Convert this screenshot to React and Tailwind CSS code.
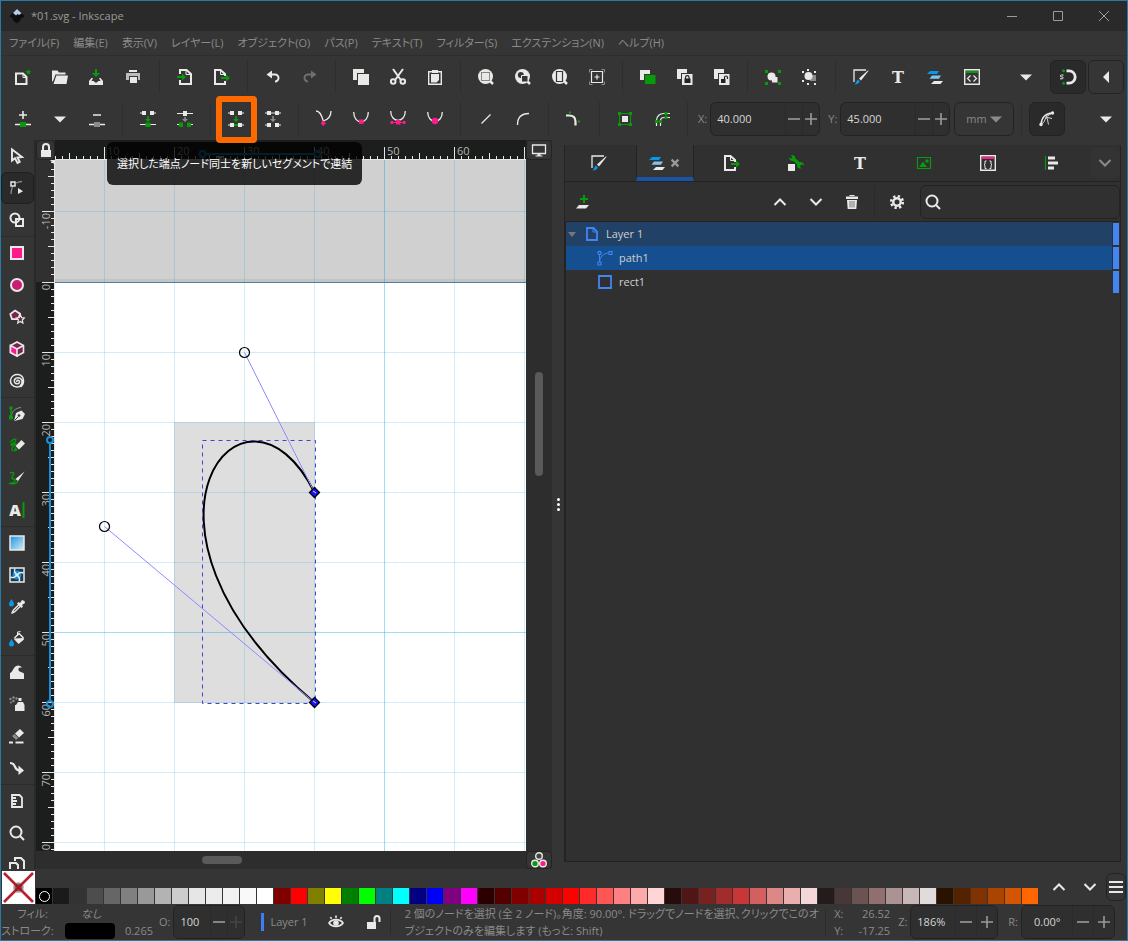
import React, { useState } from 'react';

const W = '#e9e9e7';
const G = '#079a0b';
const P = '#ff1a8c';
const B = '#0b97e4';
const D = '#353535';
const GR = '#8b8b8b';

const icons = {
  new: (
    <>
      <path d="M1 4.5h7l3.5 3.5v7H1z" fill="none" stroke={W} strokeWidth="2" />
      <path d="M8 4v4.500h4" fill="none" stroke={W} />
      <path d="M13.300 0l.9 1.900 2 .2-1.500 1.400.5 2-1.900-1-1.800 1 .5-2-1.500-1.400 2-.2z" fill={G} />
    </>
  ),
  open: <path d="M0 13V1.500h5.500l1.500 2h6.500v2H3.500L1.500 11zM4.300 6.500H16L14.500 15H1.500z" fill={W} />,
  save: (
    <>
      <path d="M6 0h2v4h3L7 8 3 4h3z" fill={G} />
      <path d="M2.500 9H4l-1.500 3H5c.5 2 3.500 2 4 0h2.500L10 9h1.500L14 12v4H0v-4z" fill={W} />
    </>
  ),
  print: (
    <>
      <path d="M3 1h8v2H3zM4 8h7v6H4z" fill={W} />
      <path d="M0 4h14v7h-2V7H3v4H0z" fill="#bcbcbc" />
    </>
  ),
  import: (
    <>
      <path d="M3 5V1h6.500L14 5v10H3v-4" fill="none" stroke={W} strokeWidth="2" />
      <path d="M9 1v4.500h5" fill="none" stroke={W} />
      <path d="M0 7h5V4.500L9 8l-4 3.500V9H0z" fill={G} />
    </>
  ),
  export: (
    <>
      <path d="M11 12v3H1V1h5.500L11 5v2" fill="none" stroke={W} strokeWidth="2" />
      <path d="M6.500 1v4.500H11" fill="none" stroke={W} />
      <path d="M7 8h5V5.500L16 9l-4 3.500V10H7z" fill={G} />
    </>
  ),
  undo: (
    <>
      <path d="M7 1.500v8L1.500 5.500z" fill={W} />
      <path d="M5 5.500h5a3.500 3.500 0 0 1 0 7" fill="none" stroke={W} strokeWidth="2" />
    </>
  ),
  redo: (
    <>
      <path d="M9 1.500v8l5.500-4z" fill="#6f6f6f" />
      <path d="M11 5.500H6a3.500 3.500 0 0 0 0 7" fill="none" stroke="#6f6f6f" strokeWidth="2" />
    </>
  ),
  copy: <path d="M0 0h11v4H4v7H0zM5 5h11v11H5z" fill={W} />,
  cut: (
    <g fill="none" stroke={W} strokeWidth="2">
      <circle cx="3.200" cy="12.500" r="2.300" />
      <circle cx="12.800" cy="12.500" r="2.300" />
      <path d="M3 0l7.500 10.500M13 0L5.500 10.500" />
    </g>
  ),
  paste: (
    <>
      <path d="M1.700 2.700h12.600v12.600H1.700z" fill="none" stroke={W} strokeWidth="1.400" />
      <path d="M5 1h6v3H5zM4 5h8v6l-2.500 2.500H4z" fill={W} />
    </>
  ),
  zoomSel: (
    <>
      <circle cx="7.500" cy="7.500" r="7.500" fill={W} />
      <path d="M12 12l3 3" stroke={W} strokeWidth="2.500" />
      <path d="M3.500 3.500h8v8h-8z" fill="none" stroke="#222" strokeDasharray="1 1" />
    </>
  ),
  zoomDraw: (
    <>
      <circle cx="7.500" cy="7.500" r="7.500" fill={W} />
      <path d="M12 12l3 3" stroke={W} strokeWidth="2.500" />
      <circle cx="5.800" cy="6" r="3" fill={D} />
      <path d="M6.500 6.500H13V13H6.500z" fill={D} stroke={W} />
    </>
  ),
  zoomPage: (
    <>
      <circle cx="7.500" cy="7.500" r="7.500" fill={W} />
      <path d="M12 12l3 3" stroke={W} strokeWidth="2.500" />
      <path d="M4.500 2.500h6v10h-6z" fill="none" stroke={D} strokeWidth="1.200" />
    </>
  ),
  zoomCenter: (
    <g fill="none">
      <path d="M.5 3.500v-3h3M12.500.5h3v3M15.500 12.500v3h-3M3.500 15.500h-3v-3" stroke={GR} />
      <path d="M2.500 2.500h11v11h-11zM8 5.500v5M5.500 8h5" stroke={W} strokeWidth="1.200" />
    </g>
  ),
  clone: (
    <>
      <path d="M0 1h10v4H4v6H0z" fill={W} />
      <path d="M5 6h10.500v9H5z" fill={G} />
    </>
  ),
  cloneLock: (
    <>
      <path d="M0 0h10v4H4v6H0zM5 5h10.500v11H5z" fill={W} />
      <path d="M7.500 9.500h6V14h-6z" fill="#222" />
      <path d="M8.500 10V8.500a1.800 1.800 0 0 1 3.600 0V10" fill="none" stroke="#222" strokeWidth="1.200" />
    </>
  ),
  cloneUnlock: (
    <>
      <path d="M0 0h10v4H4v6H0zM5 5h10.500v11H5z" fill={W} />
      <path d="M7 10h4.500v4H7z" fill="#222" />
      <path d="M10.500 10V8.500a1.500 1.500 0 0 1 3 0V10" fill="none" stroke="#222" strokeWidth="1.200" />
    </>
  ),
  group: (
    <>
      <path d="M0 1h3v3H0zM13 1h3v3h-3zM0 13h3v3H0zM13 13h3v3h-3z" fill={G} />
      <path d="M7 8h5.500v5.500H7z" fill={W} />
      <circle cx="6.500" cy="7.500" r="4" fill={W} />
    </>
  ),
  ungroup: (
    <>
      <path d="M0 2h2v2H0zM5 0h2v2H5zM12 2h2v2h-2zM0 11h2v2H0zM5 14h2v2H5zM12 14h2v2h-2z" fill={W} />
      <path d="M8 6h6v6H8z" fill={GR} />
      <circle cx="6.500" cy="7" r="4" fill={W} />
    </>
  ),
  fill: (
    <>
      <path d="M1 13V1h12" fill="none" stroke={W} strokeWidth="1.300" />
      <path d="M15.800 1.500L8 11.500 6 9.500 14.500 1.800z" fill={W} />
      <path d="M5 10.500l1.800 1.800c-.5 2.500-3 3.200-5.300 3.200C3 14.500 3 12 5 10.500z" fill={B} />
    </>
  ),
  text: (
    <text x="8" y="14" textAnchor="middle" fontFamily="DejaVu Serif" fontWeight="bold" fontSize="16" fill={W}>T</text>
  ),
  layers: (
    <>
      <path d="M3 2h9l-2 3H0z" fill={B} />
      <path d="M5 6.500h9l-2 3.200H2.500z" fill="#7cc6f0" />
      <path d="M7 12h9l-2.500 3H4z" fill={W} />
    </>
  ),
  xml: (
    <>
      <path d="M.7.7h14.600v14.600H.7z" fill="none" stroke={W} strokeWidth="1.400" />
      <path d="M2 2h12v2H2z" fill={G} />
      <path d="M6.500 6.500L3.500 9.500l3 3M9.500 6.500l3 3-3 3" fill="none" stroke={W} strokeWidth="1.200" />
    </>
  ),
  caret: <path d="M2 5.500h12L8 11.500z" fill={W} />,
  caretGray: <path d="M2 5.500h12L8 11.500z" fill={GR} />,
  caretLeft: <path d="M11 2v12L5 8z" fill={W} />,
  magnet: (
    <>
      <path d="M6.500 1.800H9a6.200 6.200 0 0 1 0 12.400H6.500" fill="none" stroke={W} strokeWidth="2.800" />
      <path d="M3.500 6H1.300C0 6 0 7.800 1.300 7.800h.9c1.300 0 1.300 2 0 2H0" fill="none" stroke={W} />
      <circle cx="3.500" cy="1.800" r="1.500" fill={G} />
      <circle cx="3.500" cy="14.200" r="1.500" fill={G} />
    </>
  ),
  nodeAdd: (
    <>
      <path d="M4 4h8M8 0v8M0 13.500h16" stroke={W} strokeWidth="1.600" />
      <path d="M5 11h6v5H5z" fill={G} />
    </>
  ),
  nodeDel: (
    <>
      <path d="M4 4h8M0 13.500h16" stroke={W} strokeWidth="1.500" />
      <path d="M5 11h6v5H5z" fill={GR} />
    </>
  ),
  nodeJoin: (
    <>
      <path d="M0 2h4M12 2h4M0 13.500h16" stroke={W} strokeWidth="1.200" />
      <path d="M2 0h4v4H2zM10 0h4v4h-4z" fill={W} />
      <path d="M7.200 5h1.600v3H11l-3 3-3-3h2.200zM5.500 11.500h5V16h-5z" fill={G} />
    </>
  ),
  nodeBreak: (
    <>
      <path d="M0 2.500h16M0 13.500h3M13 13.500h3" stroke={W} strokeWidth="1.200" />
      <path d="M6 0h4v5H6z" fill={W} />
      <path d="M7.200 6h1.600v2H11l-3 3-3-3h2.200z" fill={GR} />
      <path d="M2 11.500h4V16H2zM10 11.500h4V16h-4z" fill={G} />
    </>
  ),
  segJoin: (
    <>
      <path d="M0 2h4M12 2h4M0 14h4M12 14h4" stroke={W} strokeWidth="1.200" />
      <path d="M6 14h4" stroke={G} strokeWidth="2" />
      <path d="M2 0h4v4H2zM10 0h4v4h-4zM2 12h4v4H2zM10 12h4v4h-4z" fill={W} />
      <path d="M7.200 5h1.600v3H11l-3 3-3-3h2.200z" fill={G} />
    </>
  ),
  segDel: (
    <>
      <path d="M0 2h4M12 2h4M0 14h4M12 14h4" stroke={W} strokeWidth="1.200" />
      <path d="M6 2h4" stroke={GR} strokeWidth="2" />
      <path d="M2 0h4v4H2zM10 0h4v4h-4zM2 12h4v4H2zM10 12h4v4h-4z" fill={W} />
      <path d="M7.200 5h1.600v3H11l-3 3-3-3h2.200z" fill={GR} />
    </>
  ),
  cusp: (
    <>
      <path d="M0 0c4 0 6 5 7.300 10C10.500 9 15 6 15 0" fill="none" stroke={W} strokeWidth="1.300" />
      <path d="M7.300 9.500L10 12.200 7.300 15l-2.700-2.800z" fill={P} />
    </>
  ),
  smooth: (
    <>
      <path d="M.7 1c0 13 14.600 13 14.600 0" fill="none" stroke={W} strokeWidth="1.300" />
      <path d="M6 8.500h4.500V13H6z" fill={P} />
    </>
  ),
  symm: (
    <>
      <path d="M.7 0c0 12.500 14.600 12.500 14.600 0" fill="none" stroke={W} strokeWidth="1.300" />
      <path d="M1 11.500h14" stroke={P} />
      <path d="M6 9h4.500v4.500H6zM.5 10h2.500v3H.5zM13 10h2.500v3H13z" fill={P} />
    </>
  ),
  auto: (
    <>
      <path d="M.7 1c0 12.500 14.600 12.500 14.600 0" fill="none" stroke={W} strokeWidth="1.300" />
      <circle cx="8" cy="10" r="3.200" fill={P} />
    </>
  ),
  line: <path d="M3.500 12.500l9-9" stroke={W} strokeWidth="1.300" />,
  curve: <path d="M2.500 14C2.500 7 6 2.500 14 2.500" fill="none" stroke={W} strokeWidth="1.300" />,
  corner: (
    <>
      <path d="M0 4.500h3c4 0 6.500 2 6.500 6v4" fill="none" stroke={W} strokeWidth="2.200" />
      <circle cx="4" cy="1.500" r="1.200" fill={G} />
      <circle cx="13" cy="10.500" r="1.200" fill={G} />
    </>
  ),
  toPath: (
    <>
      <path d="M2.500 2.500h11v11h-11z" fill="none" stroke={G} />
      <path d="M1 1h3v3H1zM12 1h3v3h-3zM1 12h3v3H1zM12 12h3v3h-3z" fill={G} />
      <path d="M5 5h6v6H5z" fill={W} />
    </>
  ),
  strokePath: (
    <>
      <path d="M2.500 15v-5.500c0-4 3-7 7-7H16M6.500 15V10c0-2 1.500-3.500 3.500-3.500h6" fill="none" stroke={W} strokeWidth="1.200" />
      <path d="M2.500 10.500h4M12 2.500v4" stroke={G} strokeWidth="1.200" />
      <path d="M1 9h3v3H1zM5 9h3v3H5zM10.500 1h3v3h-3zM10.500 5h3v3h-3z" fill={G} />
    </>
  ),
  outline: (
    <>
      <path d="M2 13.500C2.500 7 6.500 2.500 13.500 2" fill="none" stroke={W} strokeWidth="1.400" />
      <path d="M2 13.500c3-1.500 4-4.500 5-7.500l6-4M7 6.500c2 .5 1.500 4 2.500 7M7 6.500c2 0 4 .5 6 1" fill="none" stroke={W} strokeWidth=".9" />
      <circle cx="2" cy="13.500" r="1.700" fill={W} />
      <circle cx="13.500" cy="2" r="1.700" fill={W} />
    </>
  ),
  select: <path d="M3 1.500v11l3-2.300 2.500 4.800 2.200-1.200L8.500 9.500 13 9z" fill="none" stroke={W} strokeWidth="1.900" />,
  node: (
    <>
      <path d="M2 2h4v4H2z" fill="none" stroke={W} strokeWidth="1.500" />
      <path d="M7 3c2-.8 4-1.500 6-1.500M3.500 7C2.500 9 2 11 2 14" fill="none" stroke={GR} strokeWidth="1.300" />
      <path d="M9 8v6l5-2.700z" fill={W} />
    </>
  ),
  builder: (
    <g fill="none" stroke={W} strokeWidth="2">
      <circle cx="6" cy="6" r="4.500" />
      <path d="M7 7h7v7H7z" />
    </g>
  ),
  rect: <path d="M2 2h12v12H2z" fill={P} stroke={W} strokeWidth="2" />,
  ellipse: <circle cx="8" cy="8" r="6" fill="#cc1a75" stroke={W} strokeWidth="2" />,
  star: (
    <>
      <path d="M6 1.500l5 3.200-1.800 5.500H3L1.300 5z" fill="#7c2350" stroke={W} strokeWidth="1.800" />
      <path d="M11.500 6l1.200 2.700 2.600.3-2 2 .6 3-2.600-1.500L8.700 14l.7-3-2-2 2.700-.3z" fill="#6a2048" stroke={W} strokeWidth="1.200" />
    </>
  ),
  cube: (
    <>
      <path d="M8 1l6.500 3.500v7L8 15l-6.500-3.500v-7z" fill="#7c2350" stroke={W} strokeWidth="1.600" />
      <path d="M1.500 4.500L8 8v7l-6.500-3.500z" fill={P} stroke={W} strokeWidth="1.600" />
      <path d="M8 8l6.500-3.500" stroke={W} strokeWidth="1.600" />
    </>
  ),
  spiral: (
    <path d="M8 9c-1-2 2-2.500 2.500-.5.5 2.500-4 3.500-5 .5C4.500 5.500 9 3.500 11.500 5.500 15 8.500 12.500 14 8 14 3.500 14 1 10.500 1.500 7 2 3.500 5.500 1 9 1.500c3.500.5 5.500 3 5.500 6.500 0 3-1.500 5-3 6" fill="none" stroke={W} strokeWidth="1.500" />
  ),
  pen: (
    <>
      <path d="M2 12c0-6 4-10 10-10.500" fill="none" stroke={GR} />
      <path d="M2 2v11" stroke={G} strokeWidth="1.500" />
      <circle cx="2" cy="2" r="1.800" fill={G} />
      <path d="M0 9.500h4v4H0z" fill={G} />
      <path d="M5 15l2-8 5.500-2.500L16 8l-2.500 5z" fill={W} />
      <path d="M5.500 14.500l4-4" stroke={D} />
      <circle cx="10" cy="9.500" r="1.300" fill={D} />
    </>
  ),
  pencil: (
    <>
      <path d="M1 4.500c2-3 6-4.500 6-2.500S2 5 2 7s4-2.500 5-1.500-4 3-4 5 1 2.500 1 2.500" fill="none" stroke={G} strokeWidth="1.300" />
      <path d="M12.500 2L16 5.500 10 11.500 6.500 8z" fill={W} />
      <path d="M6 9l3 3-4.500 2z" fill={G} />
    </>
  ),
  brush: (
    <>
      <path d="M1 3.500c2-2 4.500-1 3.500 1s-2.500 3-1.500 4 3 0 3 1.500-2 3-4.500 3.500c3 1 6.500 0 7.500-2.500" fill="none" stroke={G} strokeWidth="1.400" />
      <path d="M15.500 1.500L9 11 6.500 9z" fill={W} />
    </>
  ),
  textTool: (
    <>
      <text x="6" y="14" textAnchor="middle" fontFamily="Open Sans" fontWeight="800" fontSize="16" fill={W}>A</text>
      <path d="M14.500 0v16" stroke={G} strokeWidth="2" />
    </>
  ),
  gradient: (
    <>
      <defs>
        <linearGradient id="grad" x1="0" y1="0" x2="1" y2="1">
          <stop offset="0" stopColor="#1b95dc" />
          <stop offset="1" stopColor="#d8ecf8" />
        </linearGradient>
      </defs>
      <path d="M1 1h14v14H1z" fill="url(#grad)" stroke={W} strokeWidth="1.500" />
    </>
  ),
  mesh: (
    <>
      <path d="M1 1h14v14H1z" fill="#123c59" stroke={W} strokeWidth="1.500" />
      <circle cx="8" cy="8" r="4.500" fill="#1b8ed6" />
      <path d="M6 1.500c-1.500 3 0 4.500 2 6.500M14.500 6c-3-1.500-4.500 0-6.500 2M10 14.500c1.500-3 0-4.500-2-6.500M1.500 10c3 1.500 4.500 0 6.500-2" fill="none" stroke={W} strokeWidth="1.500" />
      <circle cx="8" cy="8" r="1.600" fill="#dff2fc" />
    </>
  ),
  dropper: (
    <>
      <path d="M2.500 0C4 2.500 5 3.500 5 5a2.500 2.500 0 0 1-5 0c0-1.500 1-2.500 2.500-5z" fill={B} />
      <path d="M10 5.500L4.500 11c-1 1-.5 2-2 3.500C4 13 5 13.500 6 12.500L11.500 7" fill="none" stroke={W} strokeWidth="1.400" />
      <path d="M8 4.500L9.500 3l1.500 1 2-3 2.500 1L16 4l-3 2 1 1.500-1.500 1.500z" fill={W} />
    </>
  ),
  bucket: (
    <>
      <path d="M2.500 8C4 10.500 5 11.500 5 13a2.500 2.500 0 0 1-5 0c0-1.500 1-2.500 2.500-5z" fill={B} />
      <path d="M4.500 7.500l10-.5.5 1.500-5.500 4.500z" fill={W} />
      <path d="M5.500 7L10 2.500 14.500 7" fill="none" stroke={W} strokeWidth="1.500" />
      <path d="M8.500 4.500V1l3-.5" fill="none" stroke={W} />
    </>
  ),
  tweak: <path d="M1 15V9c3-.5 3-7 8-7.500 2 0 3.500 1 4 2.500-2.500-1-4 0-3.500 2C10 8.500 15 8 15 10v5z" fill={W} />,
  spray: (
    <>
      <path d="M7 9l2-3h5l1.500 3v6H6V9zM9.500 2h3v3h-3z" fill={W} />
      <g fill={GR}>
        <circle cx="1.500" cy="3" r="1.200" />
        <circle cx="4.500" cy="1.500" r="1.200" />
        <circle cx="4.500" cy="5" r="1.200" />
        <circle cx="7.500" cy="2.500" r="1.200" />
        <circle cx="2" cy="6.500" r="1" />
      </g>
    </>
  ),
  eraser: (
    <>
      <path d="M11 1l4 4-5 4.500-4-4z" fill={W} />
      <path d="M5.500 6l4 4-2.500 2-4-4z" fill={GR} />
      <path d="M0 14.500h4M6.500 14.500h8" stroke={W} strokeWidth="2" />
    </>
  ),
  connector: (
    <>
      <path d="M1 3c7 0 3 7.500 10 7.500" fill="none" stroke={W} strokeWidth="2.200" />
      <path d="M9.500 5.500L15 10.500 9.500 15z" fill={W} />
    </>
  ),
  measure: <path d="M3 2h7.500L13 4.500V14H3zM3 5h4M3 8h5M3 11h4" fill="none" stroke={W} strokeWidth="1.800" />,
  zoom: (
    <g fill="none" stroke={W} strokeWidth="2">
      <circle cx="7" cy="7" r="5.500" />
      <path d="M11 11l4 4" />
    </g>
  ),
  pages: <path d="M6 4V1h6l3 3v11M1 15V6h6l2 2v8" fill="none" stroke={W} strokeWidth="2" />,
  padlock: (
    <>
      <path d="M3 8h10v7H3z" fill={W} />
      <path d="M5 8V5a3 3 0 0 1 6 0v3" fill="none" stroke={W} strokeWidth="2" />
    </>
  ),
  unlock: (
    <>
      <path d="M1 8h9v7H1z" fill={W} />
      <path d="M8.500 8V4.500a2.500 2.500 0 0 1 5 0V8" fill="none" stroke={W} strokeWidth="2" />
    </>
  ),
  eye: (
    <g fill="none" stroke={W} strokeWidth="1.600">
      <path d="M1 9c3-4.500 11-4.500 14 0-3 4.500-11 4.500-14 0zM3.500 5L2.500 3M8 4V1.500M12.500 5l1-2" />
      <circle cx="8" cy="9" r="2" fill={W} />
    </g>
  ),
  monitor: (
    <>
      <path d="M1.500 3h13v8.500h-13z" fill="none" stroke={W} strokeWidth="1.300" />
      <path d="M6.500 12h3v1.500h2v1h-7v-1h2z" fill={W} />
    </>
  ),
  cms: (
    <g stroke={W} strokeWidth="1.400">
      <circle cx="8" cy="4" r="3.300" fill="#444" />
      <circle cx="4" cy="11.500" r="3.300" fill={G} />
      <circle cx="12" cy="11.500" r="3.300" fill={P} />
    </g>
  ),
  wrench: (
    <>
      <path d="M0 9h7v7H0z" fill={W} />
      <path d="M3 0c2.500-.5 4.500 1 4.500 3.500L11.500 7c2.500-.5 4.500 1 4.500 3.500l-2.500-1-1.500 1.500 1 2.500C10.500 14 8.500 12 9 9.500L5.500 6C3 6.500 1 5 1.200 2.500L3.500 3.500 4.300 2.500z" fill={G} />
    </>
  ),
  image: (
    <>
      <path d="M1.500 2.500h13v11h-13z" fill="none" stroke={G} strokeWidth="1.200" />
      <path d="M3 12l4-5.500L11 12z" fill={G} />
      <circle cx="11" cy="6" r="1.800" fill={G} />
    </>
  ),
  css: (
    <>
      <path d="M.7.7h14.600v14.600H.7z" fill="none" stroke={W} strokeWidth="1.400" />
      <path d="M2 2h12v2H2z" fill={P} />
      <path d="M6.500 6H5v3L4 9.700l1 .8v3h1.500M9.500 6H11v3l1 .7-1 .8v3H9.500" fill="none" stroke={W} />
    </>
  ),
  align: (
    <>
      <path d="M1.500 1v14" stroke={G} strokeWidth="1.200" />
      <path d="M4 1.500h7v3H4zM4 6.500h10v3H4zM4 11.500h6v3H4z" fill={W} />
    </>
  ),
  close: <path d="M3.500 3.500l9 9M12.500 3.500l-9 9" stroke="#9a9a9a" strokeWidth="3" />,
  up: <path d="M2.500 11L8 5.500 13.500 11" fill="none" stroke={W} strokeWidth="2" />,
  down: <path d="M2.500 5L8 10.500 13.500 5" fill="none" stroke={W} strokeWidth="2" />,
  downGray: <path d="M2.500 5L8 10.500 13.500 5" fill="none" stroke={GR} strokeWidth="2" />,
  addLayer: (
    <>
      <path d="M9 1v8M5 5h8" stroke={G} strokeWidth="2" />
      <path d="M4 11h10l-3 3.500H1z" fill={W} />
    </>
  ),
  trash: (
    <>
      <path d="M2 2.500h12V5H2zM5.500 1h5v1h-5zM3 6h10l-.7 9H3.700z" fill={W} />
      <path d="M6 7v6.500M8 7v6.500M10 7v6.500" stroke="#777" />
    </>
  ),
  gear: (
    <>
      <circle cx="8" cy="8" r="5.800" fill="none" stroke={W} strokeWidth="2.600" strokeDasharray="2.300 2.255" />
      <circle cx="8" cy="8" r="3.700" fill="none" stroke={W} strokeWidth="2.400" />
    </>
  ),
  layerDoc: (
    <>
      <path d="M3 2h6.500L13 5.500V14H3z" fill="none" stroke="#4285f4" strokeWidth="1.800" />
      <path d="M9 2v4h4" fill="none" stroke="#4285f4" />
    </>
  ),
  pathItem: (
    <>
      <path d="M2.500 5v6M2.500 12C3 7 6 3.500 11 3" fill="none" stroke="#4285f4" />
      <path d="M1 12h3v3H1zM12 1.500h3v3h-3z" fill="none" stroke="#4285f4" strokeWidth="1.200" />
      <circle cx="2.500" cy="3" r="1.600" fill="none" stroke="#4285f4" strokeWidth="1.200" />
    </>
  ),
  rectItem: <path d="M2 2h12v12H2z" fill="none" stroke="#4285f4" strokeWidth="1.800" />,
  menu: <path d="M1 3h14M1 8h14M1 13h14" stroke={W} strokeWidth="2" />,
  logo: (
    <>
      <path d="M8 1l7 6.500c1 1.500-1 2-3 2.500 1 1-1 1.500-1 2.500 0 1-2 2.500-3 2.500s-3-1-3.500-2.500C4 11 2.500 11 4 10 2 9.500 0 9 1 7.500z" fill="#0b0d12" />
      <path d="M8 1l4.500 4.300L10 7 8.500 6 7 7.500 4 5z" fill="#b9cbe4" />
    </>
  ),
};

const Icon = ({ name, className = 'size-4' }) => (
  <svg viewBox="0 0 16 16" className={`${className} shrink-0 overflow-visible`} aria-hidden="true">
    {icons[name]}
  </svg>
);

const ToolButton = ({ name, label }) => (
  <button type="button" aria-label={label || name} className="flex h-[34px] shrink-0 items-center pr-[10px] pl-[11px]">
    <Icon name={name} />
  </button>
);

const Separator = () => <div className="mr-1.5 ml-[7px] h-[34px] w-px shrink-0 bg-[#2e2e2e]" />;

const Toolbar = ({ groups }) =>
  groups.map((group, i) => (
    <React.Fragment key={i}>
      {i > 0 && <Separator />}
      {group.map((name) =>
        name === 'segJoin' ? (
          <div key={name} className="relative">
            <ToolButton name={name} />
            <div className="absolute top-10 -left-[110px] z-10 rounded-md bg-black/80 px-[10px] py-3 leading-[19px] whitespace-nowrap text-white" role="tooltip">
              選択した端点ノード同士を新しいセグメントで連結
            </div>
            <div className="absolute -top-1.5 -right-[3px] -bottom-[7px] -left-px z-20 rounded-sm border-6 border-[#ff6a00]" />
          </div>
        ) : (
          <ToolButton key={name} name={name} />
        )
      )}
    </React.Fragment>
  ));

const Spin = ({ id, label, value, width, stepWidth = 'w-[17px]', plusClass = 'text-[#9a9a9a]', inputClass = 'pl-1.5' }) => {
  const [text, setText] = useState(value);
  return (
    <div className="flex shrink-0 items-center gap-[3px]">
      <label htmlFor={id} className="text-[#8a8a8a]">{label}</label>
      <div className={`${width} flex h-[34px] rounded-md border border-[#232323] bg-[#2f2f2f]`}>
        <input
          id={id}
          value={text}
          onChange={(e) => setText(e.target.value)}
          className={`${inputClass} w-0 min-w-0 flex-1 bg-transparent text-[#d6d6d6] outline-none`}
        />
        <button type="button" aria-label={`${label} -`} className={`${stepWidth} flex items-center justify-center border-l border-[#2a2a2a] text-[#9a9a9a]`}>
          <svg viewBox="0 0 12 12" className="size-3"><path d="M0 6h12" stroke="currentColor" strokeWidth="1.600" /></svg>
        </button>
        <button type="button" aria-label={`${label} +`} className={`${stepWidth} ${plusClass} flex items-center justify-center border-l border-[#2a2a2a]`}>
          <svg viewBox="0 0 12 12" className="size-3"><path d="M0 6h12M6 0v12" stroke="currentColor" strokeWidth="1.600" /></svg>
        </button>
      </div>
    </div>
  );
};

const menus = ['ファイル(F)', '編集(E)', '表示(V)', 'レイヤー(L)', 'オブジェクト(O)', 'パス(P)', 'テキスト(T)', 'フィルター(S)', 'エクステンション(N)', 'ヘルプ(H)'];

const commands = [
  ['new', 'open', 'save', 'print'],
  ['import', 'export'],
  ['undo', 'redo'],
  ['copy', 'cut', 'paste'],
  ['zoomSel', 'zoomDraw', 'zoomPage', 'zoomCenter'],
  ['clone', 'cloneLock', 'cloneUnlock'],
  ['group', 'ungroup'],
  ['fill', 'text', 'layers', 'xml'],
];

const nodeTools = [
  ['nodeAdd', 'caret', 'nodeDel'],
  ['nodeJoin', 'nodeBreak'],
  ['segJoin', 'segDel'],
  ['cusp', 'smooth', 'symm', 'auto'],
  ['line', 'curve'],
  ['corner'],
  ['toPath', 'strokePath'],
];

const toolbox = [
  ['select', 'node', 'builder'],
  ['rect', 'ellipse', 'star', 'cube', 'spiral'],
  ['pen', 'pencil', 'brush', 'textTool'],
  ['gradient', 'mesh', 'dropper', 'bucket'],
  ['tweak', 'spray', 'eraser', 'connector'],
  ['measure', 'zoom', 'pages'],
];

const palette = [
  '#1a1a1a', '#333333', '#4d4d4d', '#666666', '#808080', '#999999', '#b3b3b3', '#cccccc', '#e6e6e6', '#ececec', '#f2f2f2', '#f9f9f9', '#ffffff',
  '#800000', '#ff0000', '#808000', '#ffff00', '#008000', '#00ff00', '#008080', '#00ffff', '#000080', '#0000ff', '#800080', '#ff00ff',
  '#2b0000', '#550000', '#800000', '#aa0000', '#d40000', '#ff0000', '#ff2a2a', '#ff5555', '#ff8080', '#ffaaaa', '#ffd5d5',
  '#280b0b', '#501616', '#782121', '#a02c2c', '#c83737', '#d35f5f', '#de8787', '#e9afaf', '#f4d7d7',
  '#241c1c', '#483737', '#6c5353', '#916f6f', '#ac9393', '#c8b7b7', '#e3dbdb',
  '#2b1100', '#552200', '#803300', '#aa4400', '#d45500', '#ff6600',
];

// document millimetres -> canvas pixels
const mx = (mm) => Math.floor(mm * 7 - 21);
const my = (mm) => Math.floor(mm * 7.01 + 122);

const range = (from, to, step = 1) => {
  const list = [];
  for (let i = from; i <= to; i += step) list.push(i);
  return list;
};

const tickSize = (mm) => (mm % 10 === 0 ? 12 : mm % 5 === 0 ? 6 : 3);

const HorizontalRuler = () => (
  <svg className="h-full w-full bg-[#1c1e1d]">
    <path d={range(0, 250).map((mm) => `M${mx(mm) + 0.5} 19v-${tickSize(mm)}`).join('')} stroke="#e6e6e6" />
    <path d="M0 19.500h2000" stroke="#e6e6e6" />
    {range(10, 60, 10).map((mm) => (
      <text key={mm} x={mx(mm) + 3} y="15" fontSize="11" fill="#b5b5b5">{mm}</text>
    ))}
    <path d="M161 16l4 4 4-4z" fill={W} />
    <g stroke="#1a8fd8" strokeWidth="2" fill="none">
      <path d="M151 14h108" />
      <circle cx="147.500" cy="14" r="3" />
      <circle cx="262.500" cy="14" r="3" />
    </g>
  </svg>
);

const VerticalRuler = () => (
  <svg className="h-full w-full bg-[#1c1e1d]">
    <path d="M0 0h19v122H0z" fill="#303030" />
    <path d={range(-17, 250).map((mm) => `M18 ${my(mm) + 0.5}h-${tickSize(mm)}`).join('')} stroke="#e6e6e6" />
    <path d="M18.500 0v2000" stroke="#e6e6e6" />
    {range(-10, 80, 10).map((mm) => (
      <text key={mm} transform={`translate(14 ${my(mm) + 2}) rotate(-90)`} textAnchor="end" fontSize="11" fill="#b5b5b5">{mm}</text>
    ))}
    <path d="M14 0h5v5z" fill={W} />
    <g stroke="#1a8fd8" strokeWidth="2" fill="none">
      <path d="M14 284v256" />
      <circle cx="14" cy="280" r="3" />
      <circle cx="14" cy="544" r="3" />
    </g>
  </svg>
);

const Canvas = () => (
  <svg className="h-full w-full bg-[#d0d0d0]">
    <path d="M-21 119h2000v4H-21z" fill="#c4c4c4" />
    <rect x={mx(0)} y={my(0)} width="1470" height="2082" fill="#fff" />
    <rect x={mx(20)} y={my(20)} width="141" height="281" fill="#dedede" />
    {range(0, 250, 10).map((mm) => (
      <path key={mm} d={`M${mx(mm) + 0.5} 0v2000`} stroke="#0099e5" strokeOpacity={mm % 50 === 0 ? 0.36 : 0.18} />
    ))}
    {range(-10, 250, 10).map((mm) => (
      <path key={mm} d={`M0 ${my(mm) + 0.5}h2000`} stroke="#0099e5" strokeOpacity={mm % 50 === 0 ? 0.36 : 0.18} />
    ))}
    <path d="M0 122.500h2000" stroke="#4f7f9f" />
    <path d="M259.500 332.500C189.500 192.500 49.500 366.500 259.500 542.500" fill="none" stroke="#000" strokeWidth="2" />
    <path d="M147.500 280.500h113v263h-113z" fill="none" stroke="#4343cf" strokeDasharray="4 4" />
    <path d="M189.500 192.500l70 140M49.500 366.500l210 176" stroke="#8c8cff" />
    <circle cx="189.500" cy="192.500" r="5" fill="none" stroke="#000" strokeWidth="1.200" />
    <circle cx="49.500" cy="366.500" r="5" fill="none" stroke="#000" strokeWidth="1.200" />
    <path d="M259.500 327.500l5 5-5 5-5-5zM259.500 537.500l5 5-5 5-5-5z" fill="#1414ff" stroke="#000" strokeWidth="1.300" />
    <path d="M258 331l3 2M258 541l3 2" stroke="#d8d8a0" />
  </svg>
);

const TitleBar = () => (
  <header className="flex h-[30px] shrink-0 items-center bg-[#2a2a2a] pl-2">
    <Icon name="logo" />
    <h1 className="ml-1.5 text-[#9b9b9b]">*01.svg - Inkscape</h1>
    <div className="ml-auto flex text-[#9b9b9b]">
      {['M0 5.500h10', 'M.5.500h9v9h-9z', 'M0 0l10 10M10 0L0 10'].map((d, i) => (
        <button key={d} type="button" aria-label={['最小化', '最大化', '閉じる'][i]} className="flex h-[30px] w-[46px] items-center justify-center">
          <svg viewBox="0 0 10 10" className="size-2.5"><path d={d} fill="none" stroke="currentColor" /></svg>
        </button>
      ))}
    </div>
  </header>
);

const Toolbox = () => (
  <aside className="flex w-[35px] shrink-0 flex-col overflow-hidden border-r-2 border-[#292929]">
    {toolbox.map((group, i) => (
      <div key={i} className={`${i > 0 ? 'border-t border-[#2b2b2b]' : ''} shrink-0`}>
        {group.map((name) => (
          <button
            key={name}
            type="button"
            aria-label={name}
            className={`${name === 'node' ? 'rounded-md border border-[#1f1f1f] bg-[#2a2a2a]' : ''} flex h-8 w-full items-center justify-center pr-px`}
          >
            <Icon name={name} />
          </button>
        ))}
      </div>
    ))}
  </aside>
);

const Workspace = () => (
  <main className="grid min-w-0 flex-1 grid-cols-[19px_1fr_26px] grid-rows-[20px_1fr_18px] overflow-hidden bg-[#2d2d2d]">
    <button type="button" aria-label="ガイドをロック" className="flex items-center justify-center rounded border border-[#232323] bg-[#353535]">
      <Icon name="padlock" />
    </button>
    <HorizontalRuler />
    <button type="button" aria-label="表示" className="flex items-center justify-center rounded border border-[#232323] bg-[#353535]">
      <Icon name="monitor" />
    </button>
    <VerticalRuler />
    <Canvas />
    <div className="flex justify-center">
      <div className="mt-[212px] h-[104px] w-2 rounded-full bg-[#5a5a5a]" />
    </div>
    <div className="col-span-2 flex items-center pl-[166px]">
      <div className="h-2 w-10 rounded-full bg-[#5a5a5a]" />
    </div>
    <button type="button" aria-label="カラーマネジメント" className="flex items-center justify-center rounded border border-[#232323] bg-[#353535]">
      <Icon name="cms" />
    </button>
  </main>
);

const objects = [
  { name: 'Layer 1', icon: 'layerDoc', row: 'bg-[#224166] pl-[2px]', open: true },
  { name: 'path1', icon: 'pathItem', row: 'bg-[#164f90] pl-[31px]' },
  { name: 'rect1', icon: 'rectItem', row: 'pl-[31px]' },
];

const ObjectsPanel = () => (
  <section className="mt-[5px] mr-[6px] mb-[7px] flex w-[557px] shrink-0 flex-col border border-t-0 border-[#232323] bg-[#303030]">
    <div className="flex h-[37px] shrink-0 items-stretch border-b border-[#232323]">
      <button type="button" aria-label="フィル/ストローク" className="flex w-[71px] items-center px-[26px]">
        <Icon name="fill" />
      </button>
      <div className="flex items-center gap-1 border-x border-b-4 border-x-[#232323] border-b-[#1a55a5] bg-[#353535] px-3 pt-1">
        <Icon name="layers" />
        <button type="button" aria-label="閉じる">
          <Icon name="close" className="size-3" />
        </button>
      </div>
      <div className="flex flex-1 pl-1.5">
        {['export', 'wrench', 'text', 'image', 'css', 'align'].map((name) => (
          <button key={name} type="button" aria-label={name} className="flex items-center px-6">
            <Icon name={name} />
          </button>
        ))}
      </div>
      <button type="button" aria-label="その他" className="my-[3px] flex w-[30px] items-center justify-center rounded-md bg-[#333333]">
        <Icon name="downGray" />
      </button>
    </div>
    <div className="flex h-[39px] shrink-0 items-center">
      <button type="button" aria-label="レイヤーを追加" className="ml-[10px]">
        <Icon name="addLayer" />
      </button>
      <div className="ml-auto flex">
        {['up', 'down', 'trash'].map((name) => (
          <button key={name} type="button" aria-label={name} className="flex h-[34px] w-9 items-center justify-center">
            <Icon name={name} />
          </button>
        ))}
      </div>
      <div className="ml-1 h-[34px] w-px bg-[#2a2a2a]" />
      <button type="button" aria-label="設定" className="mr-[5px] ml-1 flex h-[34px] w-9 items-center justify-center">
        <Icon name="gear" />
      </button>
      <label className="flex h-[34px] w-[200px] items-center rounded-md border border-[#232323] pl-1">
        <Icon name="zoom" />
        <input type="search" aria-label="検索" className="w-0 flex-1 bg-transparent px-2 text-[#d6d6d6] outline-none" />
      </label>
    </div>
    <ul className="flex-1 border-t border-l border-[#232323] text-[#cfcfcf]">
      {objects.map((item) => (
        <li key={item.name} className="flex h-6">
          <div className={`${item.row} flex flex-1 items-center`}>
            {item.open && (
              <svg viewBox="0 0 8 8" className="mr-2 size-2"><path d="M0 2h8L4 7z" fill="#777" /></svg>
            )}
            <Icon name={item.icon} />
            <span className="ml-1.5">{item.name}</span>
          </div>
          <div className="mx-px my-px w-1.5 bg-[#4285f4]" />
        </li>
      ))}
    </ul>
  </section>
);

const Palette = () => (
  <div className="flex h-[35px] shrink-0 items-end pl-px">
    <button type="button" aria-label="なし" className="mr-px size-[33px] shrink-0 bg-white">
      <svg viewBox="0 0 33 33" className="size-full">
        <circle cx="16.500" cy="16.500" r="5.500" fill="#bbb" />
        <path d="M2 2l29 29M31 2L2 31" stroke="#b8202f" strokeWidth="2.600" />
        <circle cx="16.500" cy="16.500" r="4" fill="#8a1420" fillOpacity=".6" />
      </svg>
    </button>
    <div className="flex gap-px">
      <button type="button" aria-label="#000000" className="flex size-4 items-center justify-center bg-black">
        <span className="size-[11px] rounded-full border border-white" />
      </button>
      {palette.map((color, i) => (
        <button key={i} type="button" aria-label={color} className="size-4" style={{ backgroundColor: color }} />
      ))}
    </div>
    <div className="mr-px ml-auto flex items-center self-center">
      <button type="button" aria-label="上へ" className="mr-[15px]"><Icon name="up" /></button>
      <button type="button" aria-label="下へ" className="mr-2"><Icon name="down" /></button>
      <button type="button" aria-label="パレット設定" className="flex h-7 w-5 items-center justify-center rounded-md border border-[#232323]">
        <Icon name="menu" />
      </button>
    </div>
  </div>
);

const StatusBar = () => (
  <footer className="flex h-9 shrink-0 items-center text-[#8a8a8a]">
    <div className="w-[47px] shrink-0 text-right leading-[17px] whitespace-nowrap">
      <p>フィル:</p>
      <p>ストローク:</p>
    </div>
    <div className="ml-[17px] w-[88px] shrink-0 leading-[17px]">
      <p className="w-[52px] text-center italic">なし</p>
      <div className="flex items-center justify-between">
        <span className="h-4 w-[50px] rounded-sm bg-black" />
        <span>0.265</span>
      </div>
    </div>
    <div className="ml-1.5">
      <Spin id="opacity" label="O:" value="100" width="w-[72px]" plusClass="text-[#454545]" />
    </div>
    <div className="ml-4 h-[18px] w-[3px] shrink-0 bg-[#3d7ff0]" />
    <span className="ml-1.5 shrink-0">Layer 1</span>
    <button type="button" aria-label="表示切替" className="ml-5 shrink-0"><Icon name="eye" /></button>
    <button type="button" aria-label="ロック切替" className="ml-[22px] shrink-0"><Icon name="unlock" /></button>
    <div className="mr-[14px] ml-2 h-6 w-px shrink-0 bg-[#2c2c2c]" />
    <p className="min-w-0 flex-1 leading-[17px]">
      2 個のノードを選択 (全 2 ノード)。角度: 90.00°. ドラッグでノードを選択、クリックでこのオブジェクトのみを編集します (もっと: Shift)
    </p>
    <div className="mr-2 ml-1 h-7 w-px shrink-0 bg-[#2c2c2c]" />
    <dl className="grid w-14 shrink-0 grid-cols-[auto_1fr] leading-[17px]">
      <dt>X:</dt>
      <dd className="text-right">26.52</dd>
      <dt>Y:</dt>
      <dd className="text-right">-17.25</dd>
    </dl>
    <div className="mr-3 ml-2 flex gap-2.5">
      <Spin id="zoom" label="Z:" value="186%" width="w-[88px]" stepWidth="w-[21px]" />
      <Spin id="rotation" label="R:" value="0.00°" width="w-[94px]" stepWidth="w-[21px]" inputClass="pl-3" />
    </div>
  </footer>
);

const App = () => (
  <div className="flex h-screen flex-col overflow-hidden border border-[#2a7aa8] bg-[#353535] font-['Open_Sans','Noto_Sans_CJK_JP',sans-serif] text-[11px] [font-feature-settings:'palt']">
    <TitleBar />
    <nav className="flex h-[25px] shrink-0 items-center border-b border-[#2e2e2e] pt-px pl-px text-[#8a8a8a]">
      {menus.map((menu) => (
        <button key={menu} type="button" className="px-[7px] whitespace-nowrap">{menu}</button>
      ))}
    </nav>
    <div className="flex h-[42px] shrink-0 items-center px-[3px]">
      <Toolbar groups={commands} />
      <div className="ml-auto flex items-center">
        <ToolButton name="caret" label="その他のコマンド" />
        <button type="button" aria-label="スナップ" className="mr-0.5 ml-1.5 flex h-[34px] w-9 items-center justify-center rounded-md border border-[#232323] bg-[#2a2a2a]">
          <Icon name="magnet" />
        </button>
        <button type="button" aria-label="スナップ設定" className="flex h-[34px] w-9 items-center justify-center rounded-md border border-[#232323]">
          <Icon name="caretLeft" />
        </button>
      </div>
    </div>
    <div className="flex h-[42px] shrink-0 items-center px-[3px]">
      <Toolbar groups={nodeTools} />
      <Separator />
      <div className="ml-1 flex items-center gap-1">
        <Spin id="x" label="X:" value="40.000" width="w-[110px]" />
        <div className="ml-1">
          <Spin id="y" label="Y:" value="45.000" width="w-[110px]" />
        </div>
        <div className="relative flex items-center">
          <select aria-label="単位" className="h-[34px] w-[60px] appearance-none rounded-md border border-[#232323] bg-transparent pl-[11px] text-[#8a8a8a]">
            <option>mm</option>
            <option>px</option>
          </select>
          <div className="pointer-events-none absolute right-2.5"><Icon name="caretGray" /></div>
        </div>
      </div>
      <div className="mx-[7px] h-[34px] w-px bg-[#2e2e2e]" />
      <button type="button" aria-label="ハンドルを表示" className="flex h-[34px] w-9 items-center justify-center rounded-md border border-[#232323] bg-[#2a2a2a]">
        <Icon name="outline" />
      </button>
      <div className="ml-auto">
        <ToolButton name="caret" label="その他" />
      </div>
    </div>
    <div className="flex min-h-0 flex-1">
      <Toolbox />
      <Workspace />
      <div className="flex w-3 shrink-0 flex-col items-center justify-center gap-0.5">
        <span className="size-[3px] rounded-full bg-white" />
        <span className="size-[3px] rounded-full bg-white" />
        <span className="size-[3px] rounded-full bg-white" />
      </div>
      <ObjectsPanel />
    </div>
    <Palette />
    <StatusBar />
  </div>
);

export default App;
